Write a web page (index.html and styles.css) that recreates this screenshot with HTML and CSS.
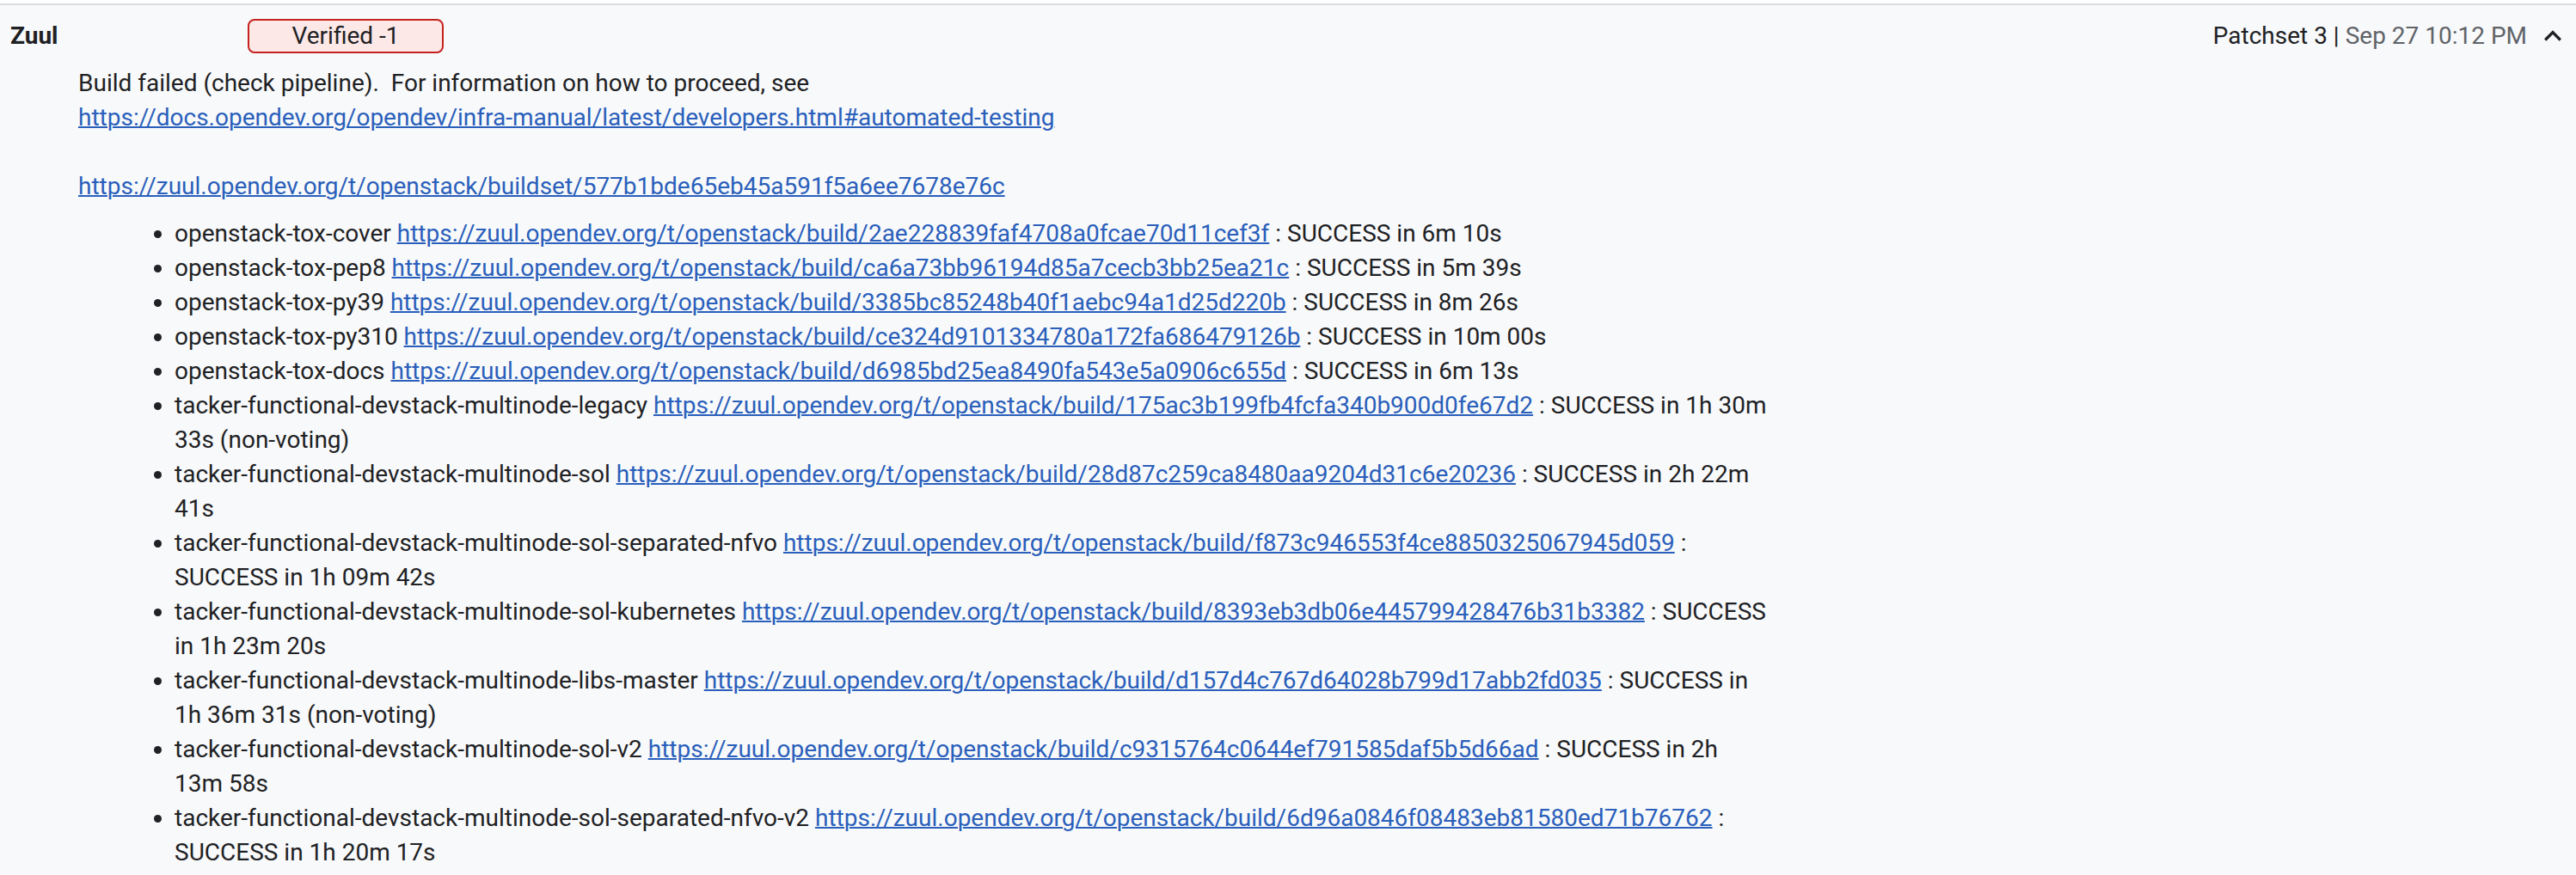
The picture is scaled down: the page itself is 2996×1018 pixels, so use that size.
FILE: index.html
```html
<!DOCTYPE html>
<html lang="en">
<head>
<meta charset="utf-8">
<title>Zuul message</title>
<link rel="stylesheet" href="styles.css">
</head>
<body>
<div class="page">
  <div class="message">
    <div class="header">
      <span class="name">Zuul</span>
      <span class="vote">Verified -1</span>
      <div class="meta">
        <span class="ps">Patchset 3 |</span>
        <span class="date">Sep 27 10:12 PM</span>
        <svg class="chev" viewBox="0 0 24 24" width="40" height="40" aria-hidden="true"><path d="M12 8l-6 6 1.41 1.41L12 10.83l4.59 4.58L18 14z"/></svg>
      </div>
    </div>
    <div class="body">
      <p class="para">Build failed (check pipeline).&nbsp; For information on how to proceed, see<br><a href="#">https://docs.opendev.org/opendev/infra-manual/latest/developers.html#automated-testing</a></p>
      <p class="para gap"><a href="#">https://zuul.opendev.org/t/openstack/buildset/577b1bde65eb45a591f5a6ee7678e76c</a></p>
      <ul class="jobs">
        <li>openstack-tox-cover <a href="#">https://zuul.opendev.org/t/openstack/build/2ae228839faf4708a0fcae70d11cef3f</a> : SUCCESS in 6m 10s</li>
        <li>openstack-tox-pep8 <a href="#">https://zuul.opendev.org/t/openstack/build/ca6a73bb96194d85a7cecb3bb25ea21c</a> : SUCCESS in 5m 39s</li>
        <li>openstack-tox-py39 <a href="#">https://zuul.opendev.org/t/openstack/build/3385bc85248b40f1aebc94a1d25d220b</a> : SUCCESS in 8m 26s</li>
        <li>openstack-tox-py310 <a href="#">https://zuul.opendev.org/t/openstack/build/ce324d9101334780a172fa686479126b</a> : SUCCESS in 10m 00s</li>
        <li>openstack-tox-docs <a href="#">https://zuul.opendev.org/t/openstack/build/d6985bd25ea8490fa543e5a0906c655d</a> : SUCCESS in 6m 13s</li>
        <li>tacker-functional-devstack-multinode-legacy <a href="#">https://zuul.opendev.org/t/openstack/build/175ac3b199fb4fcfa340b900d0fe67d2</a> : SUCCESS in 1h 30m 33s (non-voting)</li>
        <li>tacker-functional-devstack-multinode-sol <a href="#">https://zuul.opendev.org/t/openstack/build/28d87c259ca8480aa9204d31c6e20236</a> : SUCCESS in 2h 22m 41s</li>
        <li>tacker-functional-devstack-multinode-sol-separated-nfvo <a href="#">https://zuul.opendev.org/t/openstack/build/f873c946553f4ce8850325067945d059</a> : SUCCESS in 1h 09m 42s</li>
        <li>tacker-functional-devstack-multinode-sol-kubernetes <a href="#">https://zuul.opendev.org/t/openstack/build/8393eb3db06e445799428476b31b3382</a> : SUCCESS in 1h 23m 20s</li>
        <li>tacker-functional-devstack-multinode-libs-master <a href="#">https://zuul.opendev.org/t/openstack/build/d157d4c767d64028b799d17abb2fd035</a> : SUCCESS in 1h 36m 31s (non-voting)</li>
        <li>tacker-functional-devstack-multinode-sol-v2 <a href="#">https://zuul.opendev.org/t/openstack/build/c9315764c0644ef791585daf5b5d66ad</a> : SUCCESS in 2h 13m 58s</li>
        <li>tacker-functional-devstack-multinode-sol-separated-nfvo-v2 <a href="#">https://zuul.opendev.org/t/openstack/build/6d96a0846f08483eb81580ed71b76762</a> : SUCCESS in 1h 20m 17s</li>
      </ul>
    </div>
  </div>
</div>
</body>
</html>
```
FILE: styles.css
```css
html, body {
  margin: 0;
  padding: 0;
  background: #f8f9fa;
}

body {
  font-family: Roboto, "Liberation Sans", sans-serif;
  font-size: 28px;
  line-height: 40px;
  color: #202124;
}

.page {
  padding-top: 4px;
  background: #ffffff;
  min-height: 100vh;
  box-sizing: border-box;
}

.message {
  border-top: 2px solid #dadce0;
  background: #f8f9fa;
  min-height: calc(100vh - 6px);
}

.header {
  display: flex;
  align-items: center;
  height: 40px;
  padding: 16px 7px 0 12px;
}

.name {
  width: 276px;
  font-weight: 700;
}

.vote {
  box-sizing: border-box;
  width: 228px;
  height: 40px;
  line-height: 36px;
  text-align: center;
  background: #fce8e6;
  border: 2px solid #c5221f;
  border-radius: 8px;
}

.meta {
  margin-left: auto;
  display: flex;
  align-items: center;
  gap: 7px;
}

.date {
  color: #5f6368;
}

.chev {
  fill: #202124;
  margin-left: 3px;
}

.body {
  margin-top: 15px;
  padding-left: 91px;
  width: 1964px;
}

.para {
  margin: 0;
}

.gap {
  margin-top: 40px;
}

a {
  color: #2a5fbb;
  text-decoration: underline;
  text-decoration-thickness: 2px;
}

.jobs {
  margin: 15px 0 0 0;
  padding-left: 112px;
}
```
